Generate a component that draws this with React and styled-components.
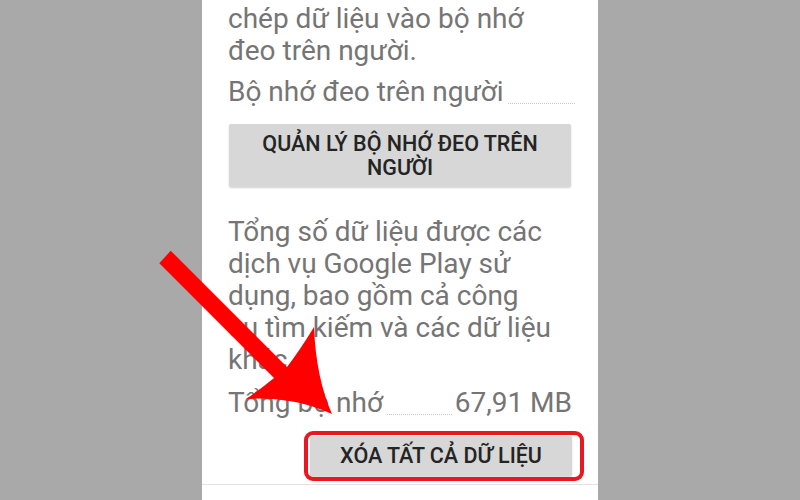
import React from 'react';
import styled, { createGlobalStyle } from 'styled-components';

const GlobalStyle = createGlobalStyle`
  html, body {
    margin: 0;
    padding: 0;
    background: #a9a9a9;
    font-family: Roboto, "Noto Sans", "Liberation Sans", sans-serif;
  }
`;

const Page = styled.div`
  position: relative;
  width: 800px;
  height: 500px;
  overflow: hidden;
  background: #a9a9a9;
  display: flex;
  justify-content: center;
`;

const Panel = styled.div`
  width: 396px;
  height: 500px;
  background: #ffffff;
  display: flex;
  flex-direction: column;
`;

const Content = styled.div`
  padding: 3px 26px 0 26px;
  display: flex;
  flex-direction: column;
`;

const Text = styled.p`
  margin: ${(p) => p.$top || 0}px 0 ${(p) => p.$gap || 0}px 0;
  font-size: 28px;
  line-height: 32px;
  color: #757575;
`;

const Row = styled.div`
  display: flex;
  align-items: flex-start;
  font-size: 28px;
  line-height: 32px;
  color: #757575;
  margin-bottom: ${(p) => p.$gap || 0}px;
`;

const Leader = styled.span`
  flex: 1;
  align-self: flex-end;
  margin: 0 ${(p) => p.$end}px 4px 4px;
  border-bottom: 1px dotted #c8c8c8;
`;

const Button = styled.button`
  position: relative;
  align-self: ${(p) => (p.$right ? 'flex-end' : 'stretch')};
  width: ${(p) => (p.$width ? `${p.$width}px` : 'auto')};
  height: ${(p) => p.$height}px;
  margin: 0 ${(p) => (p.$right ? 0 : 1)}px 0 1px;
  padding: 0 8px;
  border: none;
  border-radius: 2px;
  background: #d6d7d6;
  box-shadow: 0 1px 2px rgba(0, 0, 0, 0.18);
  font-family: "Roboto Medium", Roboto, "Noto Sans", sans-serif;
  font-size: 21.5px;
  font-weight: 500;
  line-height: 24px;
  color: #242424;
  text-align: center;
`;

const Highlight = styled.span`
  position: absolute;
  left: -6px;
  right: -12px;
  top: -5px;
  bottom: -5px;
  border: 4px solid #ea1620;
  border-radius: 9px;
  pointer-events: none;
`;

const Divider = styled.div`
  height: 1px;
  background: #e2e2e2;
  margin-top: 8px;
`;

const Arrow = styled.svg`
  position: absolute;
  left: 0;
  top: 0;
  pointer-events: none;
`;

export default function App() {
  return (
    <>
      <GlobalStyle />
      <Page>
        <Panel>
          <Content>
            <Text $gap={9}>
              chép dữ liệu vào bộ nhớ
              <br />
              đeo trên người.
            </Text>
            <Row $gap={16}>
              <span>Bộ nhớ đeo trên người</span>
              <Leader $end={-3} />
            </Row>
            <Button $height={63}>
              QUẢN LÝ BỘ NHỚ ĐEO TRÊN
              <br />
              NGƯỜI
            </Button>
            <Text $top={29} $gap={11}>
              Tổng số dữ liệu được các
              <br />
              dịch vụ Google Play sử
              <br />
              dụng, bao gồm cả công
              <br />
              cụ tìm kiếm và các dữ liệu
              <br />
              khác.
            </Text>
            <Row $gap={17}>
              <span>Tổng bộ nhớ</span>
              <Leader $end={3} />
              <span>67,91 MB</span>
            </Row>
            <Button $right $width={262} $height={40}>
              XÓA TẤT CẢ DỮ LIỆU
              <Highlight />
            </Button>
          </Content>
          <Divider />
        </Panel>
        <Arrow width="800" height="500" viewBox="0 0 800 500">
          <path
            d="M170.7 250.7 L287 367 Q300 350 314 327 Q316 378 332 414 Q292 396 246 399 Q262 388 274 378 L159.3 263.3 Z"
            fill="#fe0000"
          />
        </Arrow>
      </Page>
    </>
  );
}
